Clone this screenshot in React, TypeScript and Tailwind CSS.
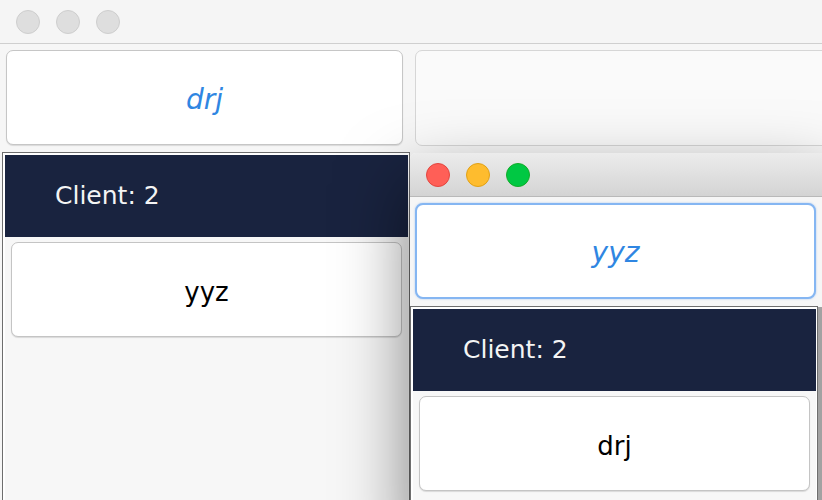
import React from 'react';

const font = "font-['DejaVu_Sans',_'Noto_Sans',_sans-serif]";

const Lights = ({ active }: { active: boolean }) => (
  <div className="flex items-center gap-4 pl-4">
    {active ? (
      <>
        <div className="w-6 h-6 rounded-full bg-[#ff5f57] border border-[#e2463f]" />
        <div className="w-6 h-6 rounded-full bg-[#febc2e] border border-[#e1a116]" />
        <div className="w-6 h-6 rounded-full bg-[#00c843] border border-[#12ac28]" />
      </>
    ) : (
      <>
        <div className="w-6 h-6 rounded-full bg-[#dedede] border border-[#cecece]" />
        <div className="w-6 h-6 rounded-full bg-[#dedede] border border-[#cecece]" />
        <div className="w-6 h-6 rounded-full bg-[#dedede] border border-[#cecece]" />
      </>
    )}
  </div>
);

const ClientPanel = ({ name }: { name: string }) => (
  <div className="w-[408px] h-full border border-[#6e6e6e]">
    <div className="h-full border-2 border-white border-r border-b-0 bg-[#f7f7f7] flex flex-col">
      <div className="h-[82px] bg-[#19233f] flex items-center pl-[50px] text-[25px] text-[#f4f4f4]">
        Client: 2
      </div>
      <div className="mx-[6px] mt-[5px] h-[95px] bg-white border border-[#c4c4c4] rounded-[7px] shadow-[0_1px_1px_rgba(0,0,0,0.12)] flex items-center justify-center pt-[6px] text-[26px] text-black">
        {name}
      </div>
    </div>
  </div>
);

export default function App() {
  return (
    <div className={`relative w-[822px] h-[500px] overflow-hidden bg-[#f6f6f6] ${font}`}>
      {/* back window */}
      <div className="absolute left-0 top-0 w-[840px] h-[540px] flex flex-col bg-[#f6f6f6]">
        <div className="h-[44px] shrink-0 bg-[#f5f5f5] border-b border-[#cfcfcf] flex items-center">
          <Lights active={false} />
        </div>
        <div className="flex gap-[12px] px-[6px] pt-[6px]">
          <div className="w-[398px] h-[95px] bg-white border border-[#c6c6c6] rounded-[7px] shadow-[0_1px_1px_rgba(0,0,0,0.12)] flex items-center justify-center pt-[4px] text-[28px] italic text-[#2f86e2]">
            drj
          </div>
          <div className="w-[420px] h-[96px] bg-[#fafafa] border border-[#d6d6d6] rounded-[7px]" />
        </div>
        <div className="flex-1 pt-[6px] pl-[2px]">
          <ClientPanel name="yyz" />
        </div>
      </div>

      {/* front window */}
      <div className="absolute left-[410px] top-[153px] w-[420px] h-[380px] flex flex-col bg-[#f6f6f6] rounded-tl-[6px] shadow-[0_30px_70px_rgba(0,0,0,0.5)]">
        <div className="h-[44px] shrink-0 rounded-tl-[6px] bg-gradient-to-b from-[#ececec] to-[#d4d4d4] border-b border-[#b9b9b9] flex items-center">
          <Lights active={true} />
        </div>
        <div className="pl-[5px] pt-[6px]">
          <div className="w-[401px] h-[96px] bg-white border-[2.5px] border-[#85b6f2] rounded-[8px] shadow-[0_0_2px_rgba(80,150,240,0.5)] flex items-center justify-center pt-[4px] text-[28px] italic text-[#2f86e2]">
            yyz
          </div>
        </div>
        <div className="flex-1 pt-[7px] flex">
          <ClientPanel name="drj" />
          <div className="w-[4px] bg-[#a2a2a2] mt-[1px]" />
        </div>
      </div>
    </div>
  );
}
